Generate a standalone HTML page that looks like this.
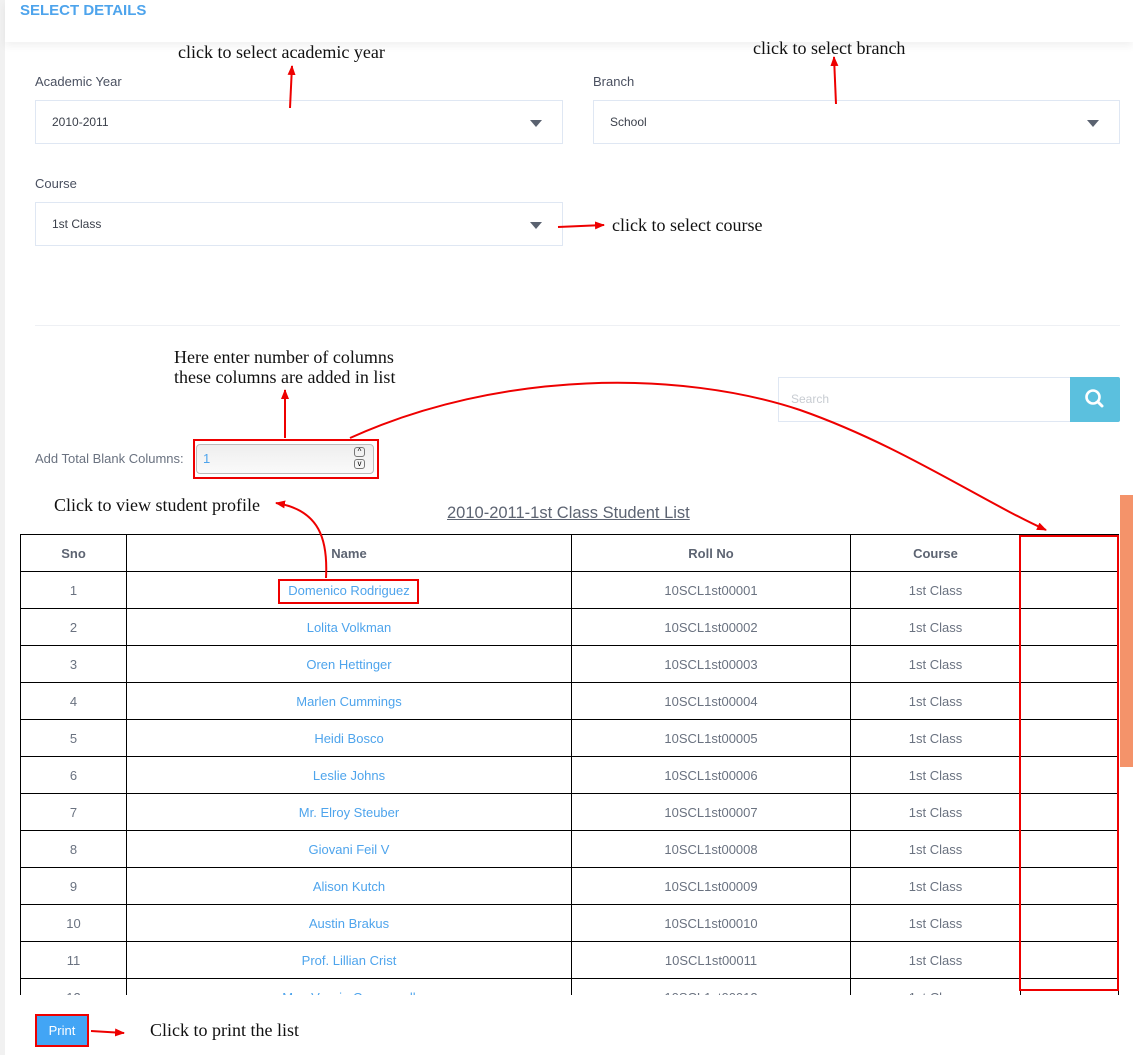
<!DOCTYPE html>
<html><head><style>
*{margin:0;padding:0;box-sizing:border-box}
body{width:1133px;height:1055px;position:relative;background:#fff;font-family:"Liberation Sans",sans-serif;overflow:hidden}
.a{position:absolute}
.lbl{font-size:13px;color:#4a5060}
.sel{border:1px solid #dfe7f3;background:#fff;font-size:12px;color:#3a3f4a;padding-left:16px;line-height:42px}
.tri{position:absolute;right:20px;top:19px;width:0;height:0;border-left:6px solid transparent;border-right:6px solid transparent;border-top:7px solid #5a6270}
.ann{font-family:"Liberation Serif",serif;font-size:18px;color:#111}
table{border-collapse:collapse;font-size:13px}
td,th{border:1px solid #000;height:37px;text-align:center;color:#6a7280;font-weight:normal}
th{font-weight:bold;color:#5d6472}
td.n{color:#4ea4ec}
</style></head><body>
<div class="a" style="left:0;top:0;width:5px;height:1055px;background:#f1f1f1"></div>
<div class="a" style="left:5px;top:0;width:1128px;height:42px;box-shadow:0 4px 8px rgba(0,0,0,0.06)"></div>
<div class="a" style="left:20px;top:2px;font-size:15px;font-weight:bold;color:#4ea4ec">SELECT DETAILS</div>

<div class="a ann" style="left:178px;top:42px">click to select academic year</div>
<div class="a ann" style="left:753px;top:38px">click to select branch</div>
<div class="a lbl" style="left:35px;top:74px">Academic Year</div>
<div class="a lbl" style="left:593px;top:74px">Branch</div>
<div class="a sel" style="left:35px;top:100px;width:528px;height:44px">2010-2011<div class="tri"></div></div>
<div class="a sel" style="left:593px;top:100px;width:527px;height:44px">School<div class="tri"></div></div>
<div class="a lbl" style="left:35px;top:176px">Course</div>
<div class="a sel" style="left:35px;top:202px;width:528px;height:44px">1st Class<div class="tri"></div></div>
<div class="a ann" style="left:612px;top:215px">click to select course</div>
<div class="a" style="left:35px;top:325px;width:1085px;height:1px;background:#eef0f4"></div>

<div class="a ann" style="left:174px;top:347px;line-height:20px">Here enter number of columns<br>these columns are added in list</div>
<div class="a" style="left:778px;top:377px;width:293px;height:45px;border:1px solid #dfe7f3;font-size:12px;color:#c8ccd2;padding-left:12px;line-height:43px">Search</div>
<div class="a" style="left:1070px;top:377px;width:50px;height:45px;background:#5bc0de;border-radius:0 2px 2px 0">
<svg width="50" height="45"><circle cx="23" cy="20" r="6.5" fill="none" stroke="#fff" stroke-width="2.6"/><line x1="28" y1="25" x2="32" y2="29" stroke="#fff" stroke-width="3" stroke-linecap="round"/></svg></div>

<div class="a" style="left:35px;top:451px;font-size:13px;color:#6a7280">Add Total Blank Columns:</div>
<div class="a" style="left:196px;top:444px;width:178px;height:30px;border:1px solid #bbb;border-radius:4px;background:linear-gradient(#eee,#fafafa);font-size:13px;color:#4ea4ec;padding:6px 0 0 6px">1</div>
<div class="a" style="left:354px;top:447px;width:11px;height:10px;border:1px solid #777;border-radius:3px;font-size:8px;line-height:8px;text-align:center">^</div>
<div class="a" style="left:354px;top:459px;width:11px;height:10px;border:1px solid #777;border-radius:3px;font-size:8px;line-height:8px;text-align:center">v</div>
<div class="a" style="left:193px;top:439px;width:186px;height:40px;border:2px solid #e00"></div>

<div class="a ann" style="left:54px;top:495px">Click to view student profile</div>
<div class="a" style="left:447px;top:504px;font-size:16.5px;color:#5d6472;text-decoration:underline">2010-2011-1st Class Student List</div>

<div class="a" style="left:20px;top:534px;width:1100px;height:461px;overflow:hidden">
<table style="width:1099px">
<tr><th style="width:106px">Sno</th><th style="width:445px">Name</th><th style="width:279px">Roll No</th><th style="width:170px">Course</th><th></th></tr>
<tr><td>1</td><td class="n">Domenico Rodriguez</td><td>10SCL1st00001</td><td>1st Class</td><td></td></tr>
<tr><td>2</td><td class="n">Lolita Volkman</td><td>10SCL1st00002</td><td>1st Class</td><td></td></tr>
<tr><td>3</td><td class="n">Oren Hettinger</td><td>10SCL1st00003</td><td>1st Class</td><td></td></tr>
<tr><td>4</td><td class="n">Marlen Cummings</td><td>10SCL1st00004</td><td>1st Class</td><td></td></tr>
<tr><td>5</td><td class="n">Heidi Bosco</td><td>10SCL1st00005</td><td>1st Class</td><td></td></tr>
<tr><td>6</td><td class="n">Leslie Johns</td><td>10SCL1st00006</td><td>1st Class</td><td></td></tr>
<tr><td>7</td><td class="n">Mr. Elroy Steuber</td><td>10SCL1st00007</td><td>1st Class</td><td></td></tr>
<tr><td>8</td><td class="n">Giovani Feil V</td><td>10SCL1st00008</td><td>1st Class</td><td></td></tr>
<tr><td>9</td><td class="n">Alison Kutch</td><td>10SCL1st00009</td><td>1st Class</td><td></td></tr>
<tr><td>10</td><td class="n">Austin Brakus</td><td>10SCL1st00010</td><td>1st Class</td><td></td></tr>
<tr><td>11</td><td class="n">Prof. Lillian Crist</td><td>10SCL1st00011</td><td>1st Class</td><td></td></tr>
<tr><td>12</td><td class="n">Mrs. Vassie Cummerall</td><td>10SCL1st00012</td><td>1st Class</td><td></td></tr>
</table></div>
<div class="a" style="left:278px;top:579px;width:141px;height:25px;border:2px solid #e00"></div>
<div class="a" style="left:1019px;top:535px;width:100px;height:456px;border:2px solid #e00"></div>
<div class="a" style="left:1120px;top:495px;width:13px;height:272px;background:#f4936a"></div>

<div class="a" style="left:35px;top:1014px;width:54px;height:33px;border:2px solid #e00;background:#42a5f5;color:#fff;font-size:13px;text-align:center;line-height:29px">Print</div>
<div class="a ann" style="left:150px;top:1020px">Click to print the list</div>

<svg class="a" style="left:0;top:0" width="1133" height="1055">
<defs><marker id="m" markerWidth="10" markerHeight="8" refX="9" refY="4" orient="auto" markerUnits="userSpaceOnUse"><path d="M0,0L10,4L0,8z" fill="#e00"/></marker></defs>
<g stroke="#e00" stroke-width="2" fill="none" marker-end="url(#m)">
<path d="M290,108L292,66"/>
<path d="M836,104L834,57"/>
<path d="M558,227L604,225"/>
<path d="M285,438L285,390"/>
<path d="M350,438C500,370 680,370 800,410C900,445 980,500 1046,530"/>
<path d="M326,578C328,540 320,510 276,503"/>
<path d="M91,1031L124,1033"/>
</g></svg>
</body></html>
